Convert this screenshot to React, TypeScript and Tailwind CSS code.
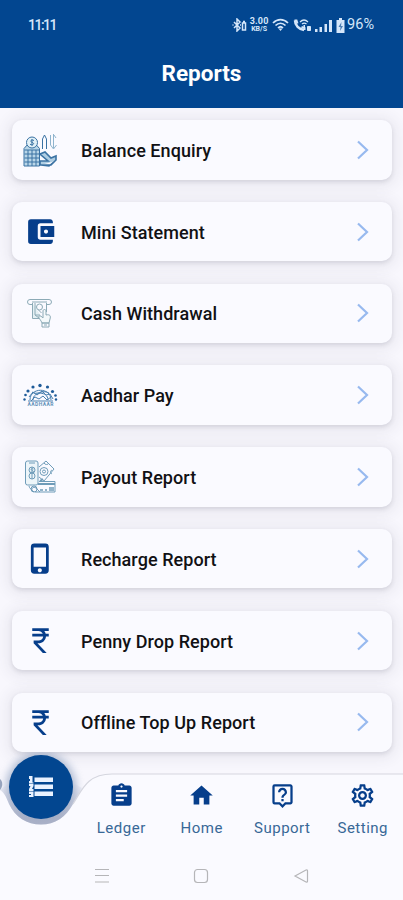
import type { ReactNode } from 'react'
import {
  MdAccountBalanceWallet,
  MdAssignment,
  MdCurrencyRupee,
  MdHome,
  MdOutlineLiveHelp,
  MdOutlineSettings,
  MdPhoneIphone,
} from 'react-icons/md'

const BalanceIcon = () => (
  <svg width="36" height="36" viewBox="0 0 36 36" fill="none" stroke="#3a72a3" strokeWidth="1">
    <path d="M2 34V16.500L6 12h7.500l4 4.500V34z" fill="#b9d6e8" />
    <path d="M2.500 18h15M2.500 22h15M2.500 26h15M2.500 30h15M6 18v16M10 18v16M14 18v16" />
    <circle cx="10" cy="10.500" r="5.500" fill="#e1f0f7" />
    <path d="M12 8.500c-3-1.500-4.500 1-2 1.800 3 1 1.500 3.200-2 2M10 7v7" />
    <path d="M20.500 17V7l2-4 2 4v10" />
    <path d="M28.500 3v10M31.500 2v14M28.500 13l3 4 3-4M32 3l2 3" stroke="#8fb4cd" />
    <path d="M18 22l5-2 6 6 5-2v4l-5 5h-11v-4h8l-7-6zM19 33l8 1 6-5" fill="#aecde2" strokeWidth="1.600" />
  </svg>
)

const CashIcon = () => (
  <svg width="36" height="36" viewBox="0 0 36 36" fill="none" stroke="#8caab6" strokeWidth="1">
    <path d="M10 9.500H8a2.500 2.500 0 0 1 0-5h19a2.500 2.500 0 0 1 0 5h-2M10 7h15" />
    <path d="M10.500 8v15.500h10M24.500 8v9M13 8v12l4 3" fill="#e3eff3" />
    <circle cx="17.500" cy="12" r="3" />
    <path d="M13 20h5M16.500 15l3 3" />
    <path d="M20 28c-1-3-4-5-3-7 1-1 3 1 4 2v-7c0-2 3-2 3 0v4c4-1 5 1 4 4l-1 4z" fill="#f4f9fb" />
    <path d="M20 28h7v4h-7zM22 30h3" />
  </svg>
)

const AadharIcon = () => (
  <svg width="36" height="36" viewBox="0 0 36 36" fill="none" stroke="#4a80af" strokeWidth="1">
    <path d="M8 23c0-13 21-13 21 0M11 23c0-9 15-9 15 0M10 15c5 4 10-3 17 1" />
    <path d="M7 20l4-5 4 3 5-4 4 4 4-1 3 5M9 24l4-4 4 2 4-3 4 4 4-3M6 24h25" />
    <g fill="#1e5b99" stroke="none">
      <circle cx="18" cy="8.500" r="1.700" />
      <circle cx="11" cy="10" r="1.600" />
      <circle cx="25.500" cy="10" r="1.600" />
      <circle cx="6" cy="14" r="1.600" />
      <circle cx="30.500" cy="14.500" r="1.600" />
      <circle cx="3.500" cy="18" r="1.300" />
      <circle cx="33.500" cy="18.500" r="1.300" />
      <circle cx="2.500" cy="22.500" r="1.200" />
      <circle cx="34" cy="22.500" r="1.200" />
    </g>
    <text
      x="18.500"
      y="28.500"
      textAnchor="middle"
      textLength="26"
      fill="#5f90b8"
      stroke="none"
      className="text-[5px] font-bold"
    >
      AADHAAR
    </text>
  </svg>
)

const PayoutIcon = () => (
  <svg width="36" height="36" viewBox="0 0 36 36" fill="none" stroke="#6f9cb9" strokeWidth="1">
    <rect x="3.500" y="2" width="12.500" height="24" rx="2" fill="#edf5f9" />
    <path d="M7 4h6" />
    <circle cx="10" cy="11" r="3" />
    <circle cx="10" cy="17" r="3" />
    <path d="M11.500 10c-3-1-3 1-1 1.500 2 1 .5 2.500-2 1.500M10 8v12" />
    <path d="M17 8l7-6 8 8-10 12-5-4M22 4c1 2 4 2 5 0M30 11c-2 1-2 3 0 4" />
    <circle cx="22" cy="12.500" r="4" />
    <circle cx="22" cy="12.500" r="1.500" />
    <path d="M17 22.500h16V33H13" />
    <path d="M16 25h17M18 22l3-2" strokeWidth="2" />
    <path d="M18 31h3M23 31h2M27 31h5M27 29h5" strokeWidth="1.500" />
    <path d="M7 27c0 2 3 4 5 6M11 33c-3-3 0-6 3-4l4 4" />
    <circle cx="12" cy="30" r="3" />
  </svg>
)

const reports: { name: string; icon: ReactNode }[] = [
  { name: 'Balance Enquiry', icon: <BalanceIcon /> },
  { name: 'Mini Statement', icon: <MdAccountBalanceWallet size={33} /> },
  { name: 'Cash Withdrawal', icon: <CashIcon /> },
  { name: 'Aadhar Pay', icon: <AadharIcon /> },
  { name: 'Payout Report', icon: <PayoutIcon /> },
  { name: 'Recharge Report', icon: <MdPhoneIphone size={33} /> },
  { name: 'Penny Drop Report', icon: <MdCurrencyRupee size={33} /> },
  { name: 'Offline Top Up Report', icon: <MdCurrencyRupee size={33} /> },
]

const tabs = [
  { name: 'Ledger', icon: MdAssignment },
  { name: 'Home', icon: MdHome },
  { name: 'Support', icon: MdOutlineLiveHelp },
  { name: 'Setting', icon: MdOutlineSettings },
]

function StatusBar() {
  return (
    <div className="flex h-12 items-center justify-between pt-0.5 pr-[29px] pl-7 text-[#d5e6fa]">
      <span className="text-[14px] font-medium tracking-[-1.500px]">11:11</span>
      <div className="flex items-center">
        {/* bluetooth with its battery */}
        <svg width="15" height="14" viewBox="0 0 15 14" fill="none" stroke="currentColor" strokeWidth="1.500">
          <path d="M2 4l6 6-3 3V1l3 3-6 6M.5 7h1M8 7h1" />
          <path d="M10.500 5h3v7h-3zM11 3.500h2" />
        </svg>
        <div className="ml-[3px] flex w-[18px] flex-col items-center font-bold">
          <span className="text-[9px] leading-[9px] tracking-[0.2px]">3.00</span>
          <span className="text-[7px] leading-[7px]">KB/S</span>
        </div>
        <svg className="ml-1" width="17" height="14" viewBox="0 0 17 14" fill="none" stroke="currentColor" strokeWidth="1.700">
          <path d="M1 5c4.500-4.500 10.500-4.500 15 0M3.500 7.500c3-3 7-3 10 0M6 10c1.500-1.500 3.500-1.500 5 0" />
          <path d="M6.500 10.500L8.500 13l2-2.500z" fill="currentColor" stroke="none" />
        </svg>
        <svg className="ml-1" width="19" height="14" viewBox="0 0 19 14" fill="none" stroke="currentColor">
          <path d="M2 2.500c0 5 4 9 9 9.500" strokeWidth="2.500" />
          <path d="M1.500 2.500h2l1 3M8.500 9l3 1v2" strokeWidth="2" />
          <path d="M7 4c2.500-2.500 5.500-2.500 8 0M9 6c1.500-1.200 3-1.200 4.500 0" strokeWidth="1.200" />
          <path d="M10.500 8h1.500" strokeWidth="2" />
          <path d="M14.500 8.500h3v4h-3z" fill="currentColor" />
        </svg>
        <svg className="ml-[3px]" width="17" height="13" viewBox="0 0 17 13" fill="currentColor">
          <path d="M0 10h2.500v3H0zM4.500 8H7v5H4.500zM9.500 5H12v8H9.500zM14 1h3v12h-3z" />
        </svg>
        <svg className="ml-1" width="9" height="15" viewBox="0 0 9 15">
          <path d="M3 0h3v2h2.500v13h-8V2H3z" fill="currentColor" />
          <path d="M5.500 4L2.500 9h2L4 13l3-5H5z" fill="#4b7db3" />
        </svg>
        <span className="ml-0.5 text-[14.500px]">96%</span>
      </div>
    </div>
  )
}

function BottomNav() {
  return (
    <nav className="relative -mt-[22px] h-[148px]">
      {/* bar outline, dipping around the round button */}
      <svg className="absolute inset-0" width="403" height="148" viewBox="0 0 403 148">
        <defs>
          <filter id="soft" x="-50%" y="-50%" width="200%" height="200%">
            <feGaussianBlur stdDeviation="4" />
          </filter>
          <linearGradient id="shade" gradientUnits="userSpaceOnUse" x1="0" y1="30" x2="0" y2="66">
            <stop offset="0" stopColor="#9ba6c2" stopOpacity="0" />
            <stop offset="1" stopColor="#a3abc3" stopOpacity="0.900" />
          </linearGradient>
        </defs>
        <circle cx="41" cy="35.500" r="35" fill="#8296b8" opacity="0.650" filter="url(#soft)" />
        <path
          d="M0 38C5 41 7 47 9 52C15 65 27 72.500 41 72.500S66 65 73 52C82 38 87 22 112 22H403V148H0z"
          fill="#fafaff"
        />
        <path
          d="M0 38C5 41 7 47 9 52C15 65 27 72.500 41 72.500S66 65 73 52C76 47 79 41 82 36L72 30H10z"
          fill="url(#shade)"
        />
        <path d="M0 27c3 2 3 8 0 11z" fill="#97a4be" />
        <path d="M73 52C82 38 87 22 112 22H403" fill="none" stroke="#d5d6df" strokeWidth="1.200" />
      </svg>
      <button
        aria-label="Reports"
        className="absolute top-[3px] left-[9px] flex size-16 items-center justify-center rounded-full bg-[#024690]"
      >
        <svg width="24" height="22" viewBox="0 0 24 22" fill="#e9f2ff">
          <path d="M0 0h3.500v6.500h1v1H0V5h1V3H0zM0 8h4.500v2l-1.500 3h1.500v2H0v-2l1.500-3H0zM0 15.500h4.500V21H0v-2h2v-1H0z" />
          <path d="M5.500 1.500h18.500v4.500H5.500zM5.500 8.500h18.500v4.500H5.500zM5.500 15.500h18.500v4.500H5.500z" />
        </svg>
      </button>
      <div className="relative ml-[81px] grid grid-cols-4 pt-[30px]">
        {tabs.map(({ name, icon: Icon }) => (
          <div key={name} className="flex flex-col items-center text-[#063e8b]">
            <Icon size={27} />
            <span className="mt-[9px] text-[15px] leading-5 tracking-[0.5px] text-[#386897]">{name}</span>
          </div>
        ))}
      </div>
      <svg
        className="absolute bottom-[16px] left-[94px]"
        width="216"
        height="16"
        viewBox="0 0 216 16"
        fill="none"
        stroke="#b5b5b8"
        strokeWidth="1.200"
      >
        <path d="M1 1.500h14M1 7.500h14M1 14h14" />
        <rect x="100.500" y="1.500" width="13" height="13" rx="3" />
        <path d="M201 8l11-6q1.500-.5 1.500 1v10q0 1.500-1.500 1z" />
      </svg>
    </nav>
  )
}

export default function App() {
  return (
    <div className="flex h-[900px] w-[403px] flex-col overflow-hidden bg-[#f8f7fd] font-['Roboto',sans-serif]">
      <header className="h-[108px] shrink-0 bg-[#024690]">
        <StatusBar />
        <h1 className="mt-2.5 text-center text-[22.500px] leading-[30px] font-bold text-white">Reports</h1>
      </header>
      <main className="flex h-[666px] shrink-0 flex-col gap-[22.300px] overflow-hidden pt-3 pr-[11px] pl-3">
        {reports.map(({ name, icon }) => (
          <div
            key={name}
            className="relative flex h-[59.500px] shrink-0 items-center rounded-[10px] bg-[#fafaff] pr-[19px] pl-2.5 shadow-[0_2px_4px_0_rgba(70,70,90,0.140),0_2px_14px_5px_rgba(70,70,90,0.080)]"
          >
            <div className="flex w-9 items-center justify-center text-[#063e8b]">{icon}</div>
            <span className="ml-[23px] flex-1 pt-px text-[18px] font-medium tracking-[0.060px] text-[#111114]">
              {name}
            </span>
            <svg width="20" height="20" viewBox="0 0 20 20" fill="none" stroke="#97b9ef" strokeWidth="2.200">
              <path d="M5 1.500l9 8.500-9 8.500" />
            </svg>
          </div>
        ))}
      </main>
      <BottomNav />
    </div>
  )
}
